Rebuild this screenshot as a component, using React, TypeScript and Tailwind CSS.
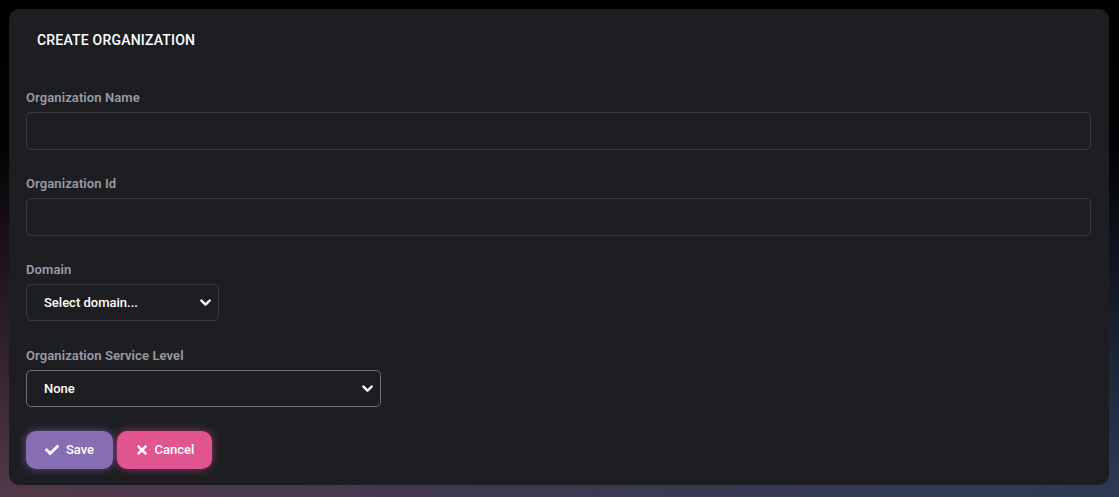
import React from "react";
import { FaCheck, FaTimes } from "react-icons/fa";

function Chevron() {
  return (
    <svg width="11" height="8" viewBox="0 0 11 8" className="pointer-events-none absolute right-[8px] top-1/2 -translate-y-1/2">
      <path d="M1.4 1.6 L5.5 5.6 L9.6 1.6" fill="none" stroke="#ffffff" strokeWidth="2.4" strokeLinecap="round" strokeLinejoin="round" />
    </svg>
  );
}

function Label({ children }: { children: React.ReactNode }) {
  return <label className="block text-[13px] font-semibold text-[#9a9ca3] leading-[16px] mb-[6px] tracking-[0.1px]">{children}</label>;
}

export default function App() {
  return (
    <div
      className="w-[1119px] h-[497px] p-[9px] pr-[10px] bg-[linear-gradient(to_bottom,rgba(0,0,0,1)_0%,rgba(0,0,0,0.95)_30%,rgba(0,0,0,0)_100%),linear-gradient(to_right,#52394a,#3d3a52_50%,#2d3b58)]"
      style={{ fontFamily: "Roboto, 'Liberation Sans', sans-serif" }}
    >
      <div className="h-[476px] rounded-[10px] bg-[#1d1e22] pl-[17px] pr-[18px]">
        <div className="pt-[23px] pl-[11px] pb-[42px]">
          <h1 className="text-[14px] font-medium text-white leading-[16px] tracking-[0.2px]">CREATE ORGANIZATION</h1>
        </div>
        <div className="flex flex-col">
          <div className="mb-[26px]">
            <Label>Organization Name</Label>
            <input className="block w-full h-[38px] rounded-[5px] border border-[#3a3b40] bg-transparent outline-none" />
          </div>
          <div className="mb-[26px]">
            <Label>Organization Id</Label>
            <input className="block w-full h-[38px] rounded-[5px] border border-[#3a3b40] bg-transparent outline-none" />
          </div>
          <div className="mb-[27px]">
            <Label>Domain</Label>
            <div className="relative w-[193px]">
              <select className="appearance-none block w-full h-[37px] rounded-[5px] border border-[#3a3b40] bg-[#1d1e22] pl-[17px] text-[13px] font-medium text-white outline-none">
                <option>Select domain...</option>
              </select>
              <Chevron />
            </div>
          </div>
          <div className="mb-[24px]">
            <Label>Organization Service Level</Label>
            <div className="relative w-[355px]">
              <select className="appearance-none block w-full h-[37px] rounded-[5px] border border-[#6e6c7c] bg-[#1d1e22] pl-[17px] text-[13px] font-medium text-white outline-none">
                <option>None</option>
              </select>
              <Chevron />
            </div>
          </div>
          <div className="flex gap-[4px]">
            <button className="flex items-center gap-[7px] h-[38px] w-[87px] justify-center rounded-[10px] bg-[#876eb4] text-white text-[13px] font-medium shadow-[0_0_8px_rgba(150,120,220,0.55)]">
              <FaCheck className="w-[14px] h-[14px]" />
              <span>Save</span>
            </button>
            <button className="flex items-center gap-[6px] h-[38px] w-[95px] justify-center rounded-[10px] bg-[#e0558f] text-white text-[13px] font-medium shadow-[0_0_8px_rgba(230,80,140,0.55)]">
              <FaTimes className="w-[14px] h-[14px]" />
              <span>Cancel</span>
            </button>
          </div>
        </div>
      </div>
    </div>
  );
}
